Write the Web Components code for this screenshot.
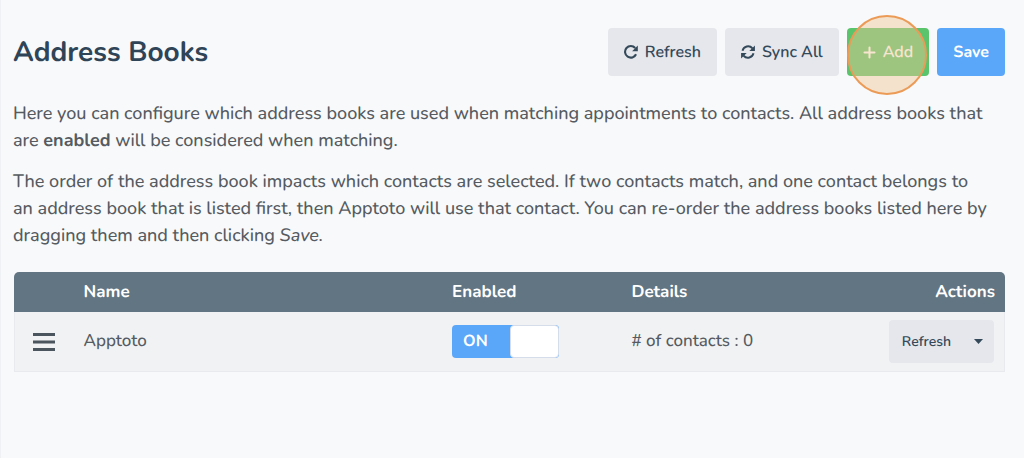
<!DOCTYPE html>
<html lang="en">
<head>
<meta charset="utf-8">
<title>Address Books</title>
<style>
  html { background: #f8f9fb; }
  body {
    margin: 0;
    font-family: Nunito, "Noto Sans", sans-serif;
    font-size: 18px;
    font-weight: 500;
    line-height: 27px;
    color: #555b61;
    text-rendering: geometricPrecision;
  }
</style>
</head>
<body>
<address-books-page></address-books-page>

<script>
const icons = {
  redo: '<svg viewBox="0 0 16 16" width="14" height="14" aria-hidden="true"><path d="M13.8 10.600A6.600 6.600 0 1 1 12.8 3.500" fill="none" stroke="currentColor" stroke-width="2.400"/><path d="M15.800 .5v6.500H9.300z" fill="currentColor"/></svg>',
  sync: '<svg viewBox="0 0 16 16" width="14" height="14" aria-hidden="true"><path d="M1.700 6.600A6.600 6.600 0 0 1 13 3.700M14.300 9.400A6.600 6.600 0 0 1 3 12.300" fill="none" stroke="currentColor" stroke-width="2.200"/><path d="M15.900 .5v6.400H9.500zM.1 15.500V9.100h6.400z" fill="currentColor"/></svg>',
  plus: '<svg viewBox="0 0 13 13" width="13" height="13" aria-hidden="true"><path d="M6.500 1.500v10M1.500 6.500h10" stroke="currentColor" stroke-width="2" stroke-linecap="round"/></svg>'
};

class ActionButton extends HTMLElement {
  connectedCallback() {
    const icon = icons[this.getAttribute('icon')] || '';
    this.attachShadow({ mode: 'open' }).innerHTML = `
      <style>
        :host { display: block; }
        button {
          display: flex; align-items: center; gap: 7px;
          height: 48px; padding: 0 16px;
          border: 0; border-radius: 4px;
          background: #e5e7ec; color: #34495a;
          font: 600 16px/24px Nunito, "Noto Sans", sans-serif;
          text-rendering: geometricPrecision;
          white-space: nowrap; cursor: pointer;
        }
        svg { display: block; }
        :host([tone="success"]) button { background: #5ac46d; color: #fff; }
        :host([tone="primary"]) button { background: #5aa7fa; color: #fff; font-weight: 700; }
      </style>
      <button type="button">${icon}<span><slot></slot></span></button>`;
  }
}
customElements.define('action-button', ActionButton);

class ClickHighlight extends HTMLElement {
  connectedCallback() {
    this.attachShadow({ mode: 'open' }).innerHTML = `
      <style>
        :host { display: block; position: relative; }
        .ring {
          position: absolute; top: -13px; left: 0;
          box-sizing: border-box; width: 80px; height: 80px;
          border: 2px solid #ec9b57; border-radius: 50%;
          background: rgba(239, 198, 150, .46);
          pointer-events: none;
        }
      </style>
      <slot></slot><div class="ring"></div>`;
  }
}
customElements.define('click-highlight', ClickHighlight);

class ToggleSwitch extends HTMLElement {
  connectedCallback() {
    this.attachShadow({ mode: 'open' }).innerHTML = `
      <style>
        :host { display: block; }
        label {
          position: relative; display: flex; box-sizing: border-box;
          width: 107px; height: 33px; overflow: hidden;
          border-radius: 4px; background: #5aa7fa; color: #fff;
          font-size: 16px; line-height: 33px; font-weight: 700; cursor: pointer;
        }
        input { position: absolute; inset: 0; margin: 0; width: 100%; height: 100%; opacity: 0; }
        .on { flex: 1; padding-left: 11px; }
        .knob {
          box-sizing: border-box; width: 49px;
          border: 1px solid #d5dcea; border-radius: 4px; background: #fff;
        }
      </style>
      <label><input type="checkbox" checked><span class="on">ON</span><span class="knob"></span></label>`;
  }
}
customElements.define('toggle-switch', ToggleSwitch);

class SplitButton extends HTMLElement {
  connectedCallback() {
    this.attachShadow({ mode: 'open' }).innerHTML = `
      <style>
        :host { display: inline-flex; border-radius: 4px; background: #e5e7ec; vertical-align: top; }
        button {
          height: 43px; border: 0; background: none; color: #34495a;
          font: 600 14px/20px Nunito, "Noto Sans", sans-serif; cursor: pointer;
          text-rendering: geometricPrecision;
        }
        .main { padding: 0 12px 0 13px; }
        .more { display: flex; align-items: center; padding: 0 11px; }
        svg { display: block; }
      </style>
      <button type="button" class="main"><slot></slot></button>
      <button type="button" class="more" aria-label="More actions">
        <svg width="9" height="5" viewBox="0 0 9 5"><path d="M0 0h9L4.500 5z" fill="currentColor"/></svg>
      </button>`;
  }
}
customElements.define('split-button', SplitButton);

class AddressBookTable extends HTMLElement {
  connectedCallback() {
    this.attachShadow({ mode: 'open' }).innerHTML = `
      <style>
        :host { display: block; }
        table {
          width: 100%; table-layout: fixed;
          border-collapse: separate; border-spacing: 0;
        }
        .c-handle { width: 6%; } .c-name { width: 37.2%; } .c-enabled { width: 18.1%; }
        th, td { font-size: 17px; line-height: 24px; text-align: left; }
        th { height: 38px; padding: 2px 10px 0; background: #627582; color: #fff; font-weight: 700; }
        th:first-child { border-top-left-radius: 5px; }
        th:last-child { border-top-right-radius: 5px; }
        td {
          height: 43px; padding: 8px 10px; background: #f1f2f4;
          border-bottom: 1px solid #e8eaee;
        }
        td:first-child { border-left: 1px solid #e8eaee; padding: 0 18px; }
        td:last-child { border-right: 1px solid #e8eaee; }
        th:last-child, td:last-child { text-align: right; }
        svg { display: block; }
      </style>
      <table>
        <colgroup><col class="c-handle"><col class="c-name"><col class="c-enabled"><col><col></colgroup>
        <thead><tr><th></th><th>Name</th><th>Enabled</th><th>Details</th><th>Actions</th></tr></thead>
        <tbody><tr>
          <td><svg width="22" height="18" viewBox="0 0 22 18"><path d="M0 1.500h22M0 9h22M0 16.500h22" stroke="#4b555e" stroke-width="3"/></svg></td>
          <td>Apptoto</td>
          <td><toggle-switch></toggle-switch></td>
          <td># of contacts : 0</td>
          <td><split-button>Refresh</split-button></td>
        </tr></tbody>
      </table>`;
  }
}
customElements.define('address-book-table', AddressBookTable);

class AddressBooksPage extends HTMLElement {
  connectedCallback() {
    this.attachShadow({ mode: 'open' }).innerHTML = `
      <style>
        :host {
          display: block; box-sizing: border-box; min-height: 100vh;
          padding: 28px 19px 28px 12px; border-left: 1px solid #eff1f4;
        }
        header { display: flex; align-items: center; justify-content: space-between; margin-bottom: 25px; }
        h1 { margin: 0; font-size: 28px; line-height: 36px; font-weight: 700; color: #2f4557; }
        nav { display: flex; gap: 8px; }
        p { margin: 0 0 14px; padding-right: 14px; }
        b { font-weight: 700; }
        address-book-table { margin: 22px 0 0 1px; }
      </style>
      <header>
        <h1>Address Books</h1>
        <nav>
          <action-button icon="redo">Refresh</action-button>
          <action-button icon="sync">Sync All</action-button>
          <click-highlight><action-button icon="plus" tone="success">Add</action-button></click-highlight>
          <action-button tone="primary">Save</action-button>
        </nav>
      </header>
      <p>Here you can configure which address books are used when matching appointments to contacts. All address books that are <b>enabled</b> will be considered when matching.</p>
      <p>The order of the address book impacts which contacts are selected. If two contacts match, and one contact belongs to an address book that is listed first, then Apptoto will use that contact. You can re-order the address books listed here by dragging them and then clicking <i>Save.</i></p>
      <address-book-table></address-book-table>`;
  }
}
customElements.define('address-books-page', AddressBooksPage);
</script>
</body>
</html>
